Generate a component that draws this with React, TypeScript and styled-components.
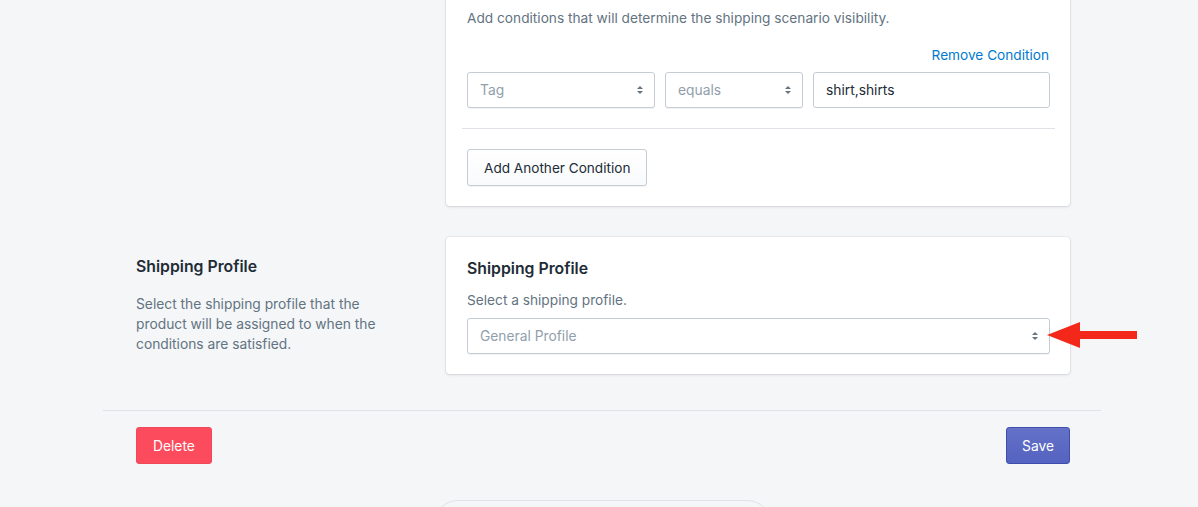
import React from "react";
import styled, { createGlobalStyle } from "styled-components";

const GlobalStyle = createGlobalStyle`
    html, body {
        margin: 0;
        padding: 0;
        background: #f4f6f8;
        font-family: Inter, "Noto Sans", "Liberation Sans", sans-serif;
        color: #212b36;
        overflow: hidden;
    }
`;

const Page = styled.div`
    position: relative;
    width: 998px;
    margin: -45px 0 0 103px;
`;

const Section = styled.div`
    display: grid;
    grid-template-columns: 290px 624px;
    column-gap: 20px;
    padding: 0 33px;
    margin-bottom: 31px;
`;

const Annotation = styled.div`
    padding-top: 19px;
`;

const AnnotationTitle = styled.h3`
    margin: 0 0 16px;
    font-size: 15.8px;
    font-weight: 600;
    line-height: 22px;
    color: #212b36;
`;

const AnnotationText = styled.p`
    margin: 0;
    font-size: 13.8px;
    line-height: 20px;
    color: #637381;
    width: 250px;
`;

/* the first card is scrolled past its heading, so it starts lower */
const Card = styled.div<{ $scrolled?: boolean }>`
    background: #fff;
    border-radius: 4px;
    box-shadow: 0 0 0 1px rgba(63, 63, 68, 0.05), 0 1px 3px 0 rgba(63, 63, 68, 0.15);
    padding: ${(p) => (p.$scrolled ? "53px" : "20px")} 20px 20px 21px;
`;

const CardTitle = styled.h2`
    margin: 0 0 9px;
    font-size: 15.8px;
    font-weight: 600;
    line-height: 24px;
    color: #212b36;
`;

const CardText = styled.p`
    margin: 0 0 8px;
    font-size: 13.7px;
    line-height: 20px;
    color: #637381;
`;

const LinkRow = styled.div`
    display: flex;
    justify-content: flex-end;
    margin-top: 17px;
    margin-bottom: 7px;
`;

const LinkButton = styled.button`
    border: 0;
    background: none;
    padding: 0 1px 0 0;
    font: inherit;
    font-size: 13.65px;
    line-height: 20px;
    color: #007ace;
    cursor: pointer;
`;

const FieldRow = styled.div`
    display: grid;
    grid-template-columns: 188px 138px 1fr;
    gap: 10px;
`;

const SelectBox = styled.div`
    display: flex;
    align-items: center;
    justify-content: space-between;
    height: 36px;
    box-sizing: border-box;
    padding: 0 10px 0 12px;
    border: 1px solid #c4cdd5;
    border-radius: 3px;
    background: #fff;
    box-shadow: 0 1px 0 rgba(22, 29, 37, 0.05);
`;

const Placeholder = styled.span`
    font-size: 13.8px;
    color: #919eab;
`;

const TextField = styled.div`
    display: flex;
    align-items: center;
    height: 36px;
    box-sizing: border-box;
    padding: 0 12px;
    border: 1px solid #c4cdd5;
    border-radius: 3px;
    background: #fff;
    font-size: 13.8px;
    color: #212b36;
`;

const Divider = styled.hr`
    border: 0;
    border-top: 1px solid #dfe3e8;
    margin: 20px -5px 20px -5px;
`;

const Button = styled.button`
    height: 37px;
    padding: 0 16px;
    border: 1px solid #c4cdd5;
    border-radius: 3px;
    background: linear-gradient(180deg, #fff, #f9fafb);
    box-shadow: 0 1px 0 rgba(22, 29, 37, 0.05);
    font: inherit;
    font-size: 13.6px;
    color: #212b36;
    cursor: pointer;
`;

const PageDivider = styled.hr`
    border: 0;
    border-top: 1px solid #dfe3e8;
    margin: 36px 0 16px;
`;

const Actions = styled.div`
    display: flex;
    justify-content: space-between;
    padding: 0 31px 0 33px;
`;

const ActionButton = styled.button<{ $tone: "danger" | "primary" }>`
    height: 37px;
    padding: 0 ${(p) => (p.$tone === "danger" ? "16px" : "15px")};
    border-radius: 3px;
    font: inherit;
    font-size: 13.8px;
    color: #fff;
    cursor: pointer;
    border: 1px solid ${(p) => (p.$tone === "danger" ? "#f0475a" : "#3f4eae")};
    background: ${(p) =>
        p.$tone === "danger"
            ? "#fb4b5c"
            : "linear-gradient(180deg, #6371c7, #5563c1)"};
    box-shadow: ${(p) =>
        p.$tone === "danger" ? "none" : "inset 0 1px 0 0 #6774c8"};
`;

const FooterHelp = styled.div`
    width: 339px;
    height: 50px;
    margin: 36px 0 0 330px;
    box-sizing: border-box;
    border: 1px solid #dfe3e8;
    border-radius: 25px;
`;

const Arrow = styled.svg`
    position: absolute;
    left: 941px;
    top: 365px;
`;

const Spinner = () => (
    <svg width="8" height="12" viewBox="0 0 8 12">
        <path d="M4 2 L7 5 H1 Z" fill="#637381" />
        <path d="M4 10 L7 7 H1 Z" fill="#637381" />
    </svg>
);

const App = () => {
    return (
        <>
            <GlobalStyle />
            <Page>
                <Section>
                    <div />
                    <Card $scrolled>
                        <CardText>Add conditions that will determine the shipping scenario visibility.</CardText>
                        <LinkRow>
                            <LinkButton>Remove Condition</LinkButton>
                        </LinkRow>
                        <FieldRow>
                            <SelectBox>
                                <Placeholder>Tag</Placeholder>
                                <Spinner />
                            </SelectBox>
                            <SelectBox>
                                <Placeholder>equals</Placeholder>
                                <Spinner />
                            </SelectBox>
                            <TextField>shirt,shirts</TextField>
                        </FieldRow>
                        <Divider />
                        <Button>Add Another Condition</Button>
                    </Card>
                </Section>
                <Section>
                    <Annotation>
                        <AnnotationTitle>Shipping Profile</AnnotationTitle>
                        <AnnotationText>
                            Select the shipping profile that the product will be assigned to when the conditions are satisfied.
                        </AnnotationText>
                    </Annotation>
                    <Card>
                        <CardTitle>Shipping Profile</CardTitle>
                        <CardText>Select a shipping profile.</CardText>
                        <SelectBox>
                            <Placeholder>General Profile</Placeholder>
                            <Spinner />
                        </SelectBox>
                    </Card>
                </Section>
                <PageDivider />
                <Actions>
                    <ActionButton $tone="danger">Delete</ActionButton>
                    <ActionButton $tone="primary">Save</ActionButton>
                </Actions>
                <FooterHelp />
                <Arrow width="96" height="30" viewBox="0 0 96 30">
                    <path d="M3 15 L36 2 L36 11 L93 11 L93 19 L36 19 L36 28 Z" fill="#f4271b" />
                </Arrow>
            </Page>
        </>
    );
};

export default App;
